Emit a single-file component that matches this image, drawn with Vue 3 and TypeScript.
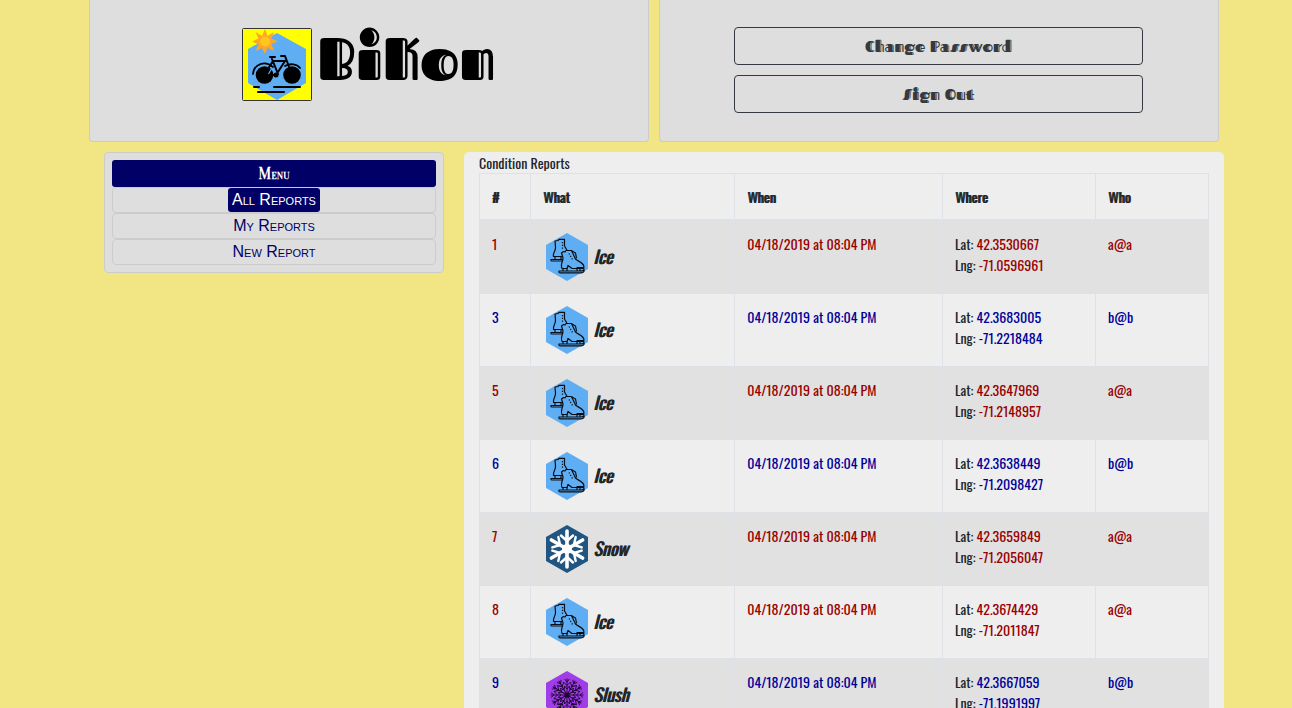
<script setup lang="ts">
type Kind = 'Ice' | 'Snow' | 'Slush'

interface Report {
  id: number
  kind: Kind
  when: string
  lat: string
  lng: string
  who: string
  mine: boolean
}

const when = '04/18/2019 at 08:04 PM'

const reports: Report[] = [
  { id: 1, kind: 'Ice', when, lat: '42.3530667', lng: '-71.0596961', who: 'a@a', mine: true },
  { id: 3, kind: 'Ice', when, lat: '42.3683005', lng: '-71.2218484', who: 'b@b', mine: false },
  { id: 5, kind: 'Ice', when, lat: '42.3647969', lng: '-71.2148957', who: 'a@a', mine: true },
  { id: 6, kind: 'Ice', when, lat: '42.3638449', lng: '-71.2098427', who: 'b@b', mine: false },
  { id: 7, kind: 'Snow', when, lat: '42.3659849', lng: '-71.2056047', who: 'a@a', mine: true },
  { id: 8, kind: 'Ice', when, lat: '42.3674429', lng: '-71.2011847', who: 'a@a', mine: true },
  { id: 9, kind: 'Slush', when, lat: '42.3667059', lng: '-71.1991997', who: 'b@b', mine: false },
]

const links = ['All Reports', 'My Reports', 'New Report']
const columns = ['#', 'What', 'When', 'Where', 'Who']
const sixths = [0, 60, 120, 180, 240, 300]
const twelfths = Array.from({ length: 12 }, (_, i) => i * 30)
const hexagon = '24,0 45,12 45,36 24,48 3,36 3,12'
</script>

<template>
  <div class="page">
    <div class="container">
      <header class="top">
        <section class="card brand">
          <svg class="logo" viewBox="0 0 70 73" aria-hidden="true">
            <rect x="0.5" y="0.5" width="69" height="72" rx="1" fill="#ffff00" stroke="#333" />
            <polygon points="35,5 64,21 64,55 35,72 6,55 6,21" fill="#5fadf2" />
            <polygon
              points="23,1 25.5,8 32,4 29.5,10.5 36,13.5 29.5,16 32,23 25.5,20 23,26 20,20 13.5,23 16.5,16.5 10,13.5 16.5,10.5 13.5,4 20,8"
              fill="#ffa52a"
            />
            <circle cx="23" cy="13.5" r="5" fill="#ffc61c" />
            <circle cx="22.5" cy="47" r="8.8" />
            <circle cx="50" cy="47" r="8.8" />
            <g fill="none" stroke="#000" stroke-linecap="round" stroke-linejoin="round">
              <path stroke-width="1.8" d="M11 46C12 36 23 32 31 39M43 38C48 35 55 36 58 40" />
              <path stroke-width="2" d="M22 47L31 33H43L34 47H22M30 31L36 46M50 47L43 28H39M28 29H33" />
              <path stroke-width="2" d="M12 59H17M32 59H58M16 64H42" />
            </g>
            <circle cx="34" cy="47" r="2.5" />
            <path d="M26.5 46L30 40" stroke="#5fadf2" stroke-width="1.2" />
          </svg>
          <h1>BiKon</h1>
        </section>
        <section class="card account">
          <button type="button">Change Password</button>
          <button type="button">Sign Out</button>
        </section>
      </header>

      <main class="content">
        <aside class="side">
          <nav class="card menu" aria-labelledby="menu-title">
            <h2 id="menu-title">Menu</h2>
            <ul>
              <li v-for="(link, i) in links" :key="link">
                <a href="#" :class="{ active: i === 0 }">{{ link }}</a>
              </li>
            </ul>
          </nav>
        </aside>

        <section class="panel">
          <table>
            <caption>Condition Reports</caption>
            <colgroup>
              <col class="c-id" />
              <col class="c-what" />
              <col class="c-when" />
              <col class="c-where" />
              <col class="c-who" />
            </colgroup>
            <thead>
              <tr>
                <th v-for="c in columns" :key="c" scope="col">{{ c }}</th>
              </tr>
            </thead>
            <tbody>
              <tr v-for="r in reports" :key="r.id" :class="r.mine ? 'red' : 'blue'">
                <td class="tone">{{ r.id }}</td>
                <td>
                  <div class="what">
                    <svg v-if="r.kind === 'Ice'" viewBox="0 0 48 48" aria-hidden="true">
                      <polygon :points="hexagon" fill="#5fadf2" />
                      <g fill="#5fadf2" stroke="#0a0f16" stroke-width="1.2" stroke-linejoin="round" stroke-linecap="round">
                        <path d="M12 8L15 7.5L16 6.3H21.5L21.5 13L25 19L21 23.5H10.5C9.5 20 13 18 12.5 14Z" />
                        <path d="M8 26.5H21V28H9.5Q7.5 28 8 26.5ZM12 23.5V26.5M18 23.5V26.5" />
                        <path d="M18.5 20L20.5 18.5L22 19L23 17.5L28.5 17.5L32.5 26C35 28.5 40 29.5 40.8 33V35.5H29L25 32.5L24 35.5H19C17 31 20 29 20 25Z" />
                        <path d="M29 18L32.5 20L33.5 25M34 34.5H40.5" fill="none" />
                        <path d="M16 38H38Q40.5 38 41 36.5V38.5Q40 40 37.5 39.8H17Q15.5 39.5 16 38ZM20 35.5V38M24 35.5V38M34 35.5V38M37 35.5V38" />
                      </g>
                      <path d="M19.5 9V17M26 20.5L29.5 26.5" fill="none" stroke="#0a0f16" stroke-width="1.2" stroke-dasharray="1.2 1.6" />
                    </svg>
                    <svg v-else-if="r.kind === 'Snow'" viewBox="0 0 48 48" aria-hidden="true">
                      <polygon :points="hexagon" fill="#1f5580" />
                      <g fill="none" stroke="#fff" stroke-linecap="round">
                        <g v-for="a in sixths" :key="a" :transform="`rotate(${a} 24 24)`">
                          <path stroke-width="3.6" d="M24 24V6" />
                          <path stroke-width="2.4" d="M24 16L18 10.5M24 16L30 10.5" />
                        </g>
                      </g>
                      <circle cx="24" cy="24" r="5" fill="#fff" />
                    </svg>
                    <svg v-else viewBox="0 0 48 48" aria-hidden="true">
                      <polygon :points="hexagon" fill="#a03ce8" />
                      <g fill="none" stroke="#1c0730" stroke-width="0.9">
                        <path
                          v-for="a in twelfths"
                          :key="a"
                          :transform="`rotate(${a} 24 24)`"
                          d="M24 24V7.5M24 18L21.5 15M24 18L26.5 15M24 14.5L20.5 11M24 14.5L27.5 11M24 11L21.5 8M24 11L26.5 8"
                        />
                      </g>
                      <circle cx="24" cy="24" r="2.5" fill="#1c0730" />
                    </svg>
                    <em>{{ r.kind }}</em>
                  </div>
                </td>
                <td class="tone">{{ r.when }}</td>
                <td>
                  Lat: <span class="tone">{{ r.lat }}</span><br />
                  Lng: <span class="tone">{{ r.lng }}</span>
                </td>
                <td class="tone">{{ r.who }}</td>
              </tr>
            </tbody>
          </table>
        </section>
      </main>
    </div>
  </div>
</template>

<style>
body {
  margin: 0;
  background: #f1e683;
}
</style>

<style scoped>
* {
  box-sizing: border-box;
}
.page {
  padding-left: 16px;
  color: #212529;
  font: 14px/21px "Oswald", "Liberation Sans Narrow", sans-serif;
}
.container {
  max-width: 1140px;
  margin: 0 auto;
}
.card {
  background: #dedede;
  border: 1px solid #ccc;
  border-radius: 4px;
}
.top {
  display: grid;
  grid-template-columns: 1fr 1fr;
  gap: 10px;
  padding: 0 5px;
}
.top .card {
  border-top: 0;
  border-radius: 0 0 4px 4px;
}
.brand {
  display: flex;
  justify-content: center;
  align-items: flex-start;
  gap: 5px;
  padding: 28px 0 40px;
}
.logo {
  width: 70px;
  height: 73px;
}
h1 {
  margin: 0;
  color: #000;
  font: 700 60px/60px "Fascinate Inline", "Fascinate", "Inter", sans-serif;
}
.account {
  display: flex;
  flex-direction: column;
  gap: 10px;
  padding: 27px 75px 0 74px;
}
.account button {
  height: 38px;
  border: 1px solid #343a40;
  border-radius: 4px;
  background: transparent;
  color: #343a40;
  font: 700 16px/24px "Fascinate Inline", "Fascinate", "Inter", sans-serif;
}
.content {
  display: grid;
  grid-template-columns: 1fr 2fr;
  align-items: start;
  margin-top: 10px;
}
.side {
  padding: 0 20px;
}
.menu {
  padding: 7px;
  text-align: center;
  font: small-caps 16px/24px "Liberation Sans", sans-serif;
}
.menu h2 {
  margin: 0;
  padding-top: 1px;
  border-radius: 3px;
  background: #006;
  color: #fff;
  font: small-caps 700 16px/26px "Oranienbaum", "Liberation Serif", serif;
}
.menu ul {
  margin: 0;
  padding: 0;
  list-style: none;
}
.menu li {
  border: 1px solid #ccc;
  border-radius: 4px;
}
.menu a {
  display: block;
  width: fit-content;
  margin: 0 auto;
  padding: 0 4px;
  border-radius: 3px;
  color: #006;
  text-decoration: none;
}
.menu a.active {
  background: #006;
  color: #fff;
}
.panel {
  padding: 0 15px;
  border-radius: 5px;
  background: #eee;
}
table {
  width: 100%;
  table-layout: fixed;
  border-collapse: collapse;
}
caption {
  text-align: left;
}
.c-id { width: 7%; }
.c-what { width: 28%; }
.c-when { width: 28.5%; }
.c-where { width: 21%; }
.c-who { width: 15.5%; }
th,
td {
  padding: 12px;
  border: 1px solid #dee2e6;
  text-align: left;
  vertical-align: top;
}
th {
  border-bottom-width: 2px;
  font-weight: 400;
  text-shadow: 1px 0 0 currentColor;
}
tbody tr:nth-child(odd) {
  background: rgba(0, 0, 0, 0.05);
}
.what {
  display: flex;
  align-items: center;
  gap: 2px;
}
.what svg {
  width: 48px;
  height: 48px;
}
.what em {
  padding-bottom: 2px;
  font-size: 18px;
  font-weight: 400;
  text-shadow: 1px 0 0 currentColor;
}
.red .tone {
  color: #900;
}
.blue .tone {
  color: #009;
}
</style>
